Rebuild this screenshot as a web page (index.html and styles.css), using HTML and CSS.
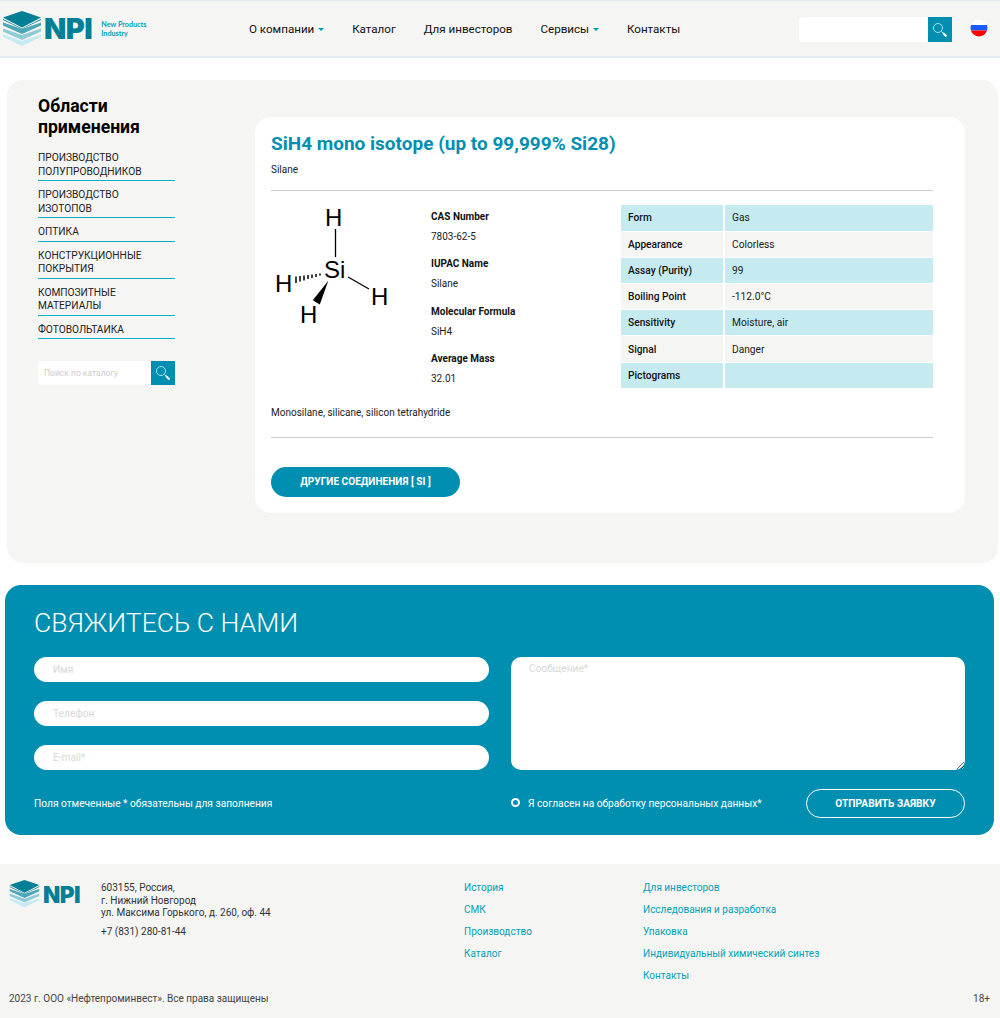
FILE: index.html
```html
<!DOCTYPE html>
<html lang="ru">
<head>
    <meta charset="UTF-8">
    <title>SiH4 mono isotope</title>
    <link rel="stylesheet" href="styles.css">
</head>
<body>

    <!-- Header -->
    <header class="header">
        <a class="logo" href="#">
            <svg class="logo-mark" viewBox="0 0 38 36" width="38" height="36">
                <polygon points="19,30 0,23.5 0,26 19,35 38,26 38,23.5" fill="#c5ebf1"/>
                <polygon points="19,24 0,17.5 0,20.5 19,29 38,20.5 38,17.5" fill="#8fcbd6"/>
                <polygon points="19,18 0,11.5 0,14.5 19,23 38,14.5 38,11.5" fill="#4ba6b7"/>
                <polygon points="19,0 0,6.5 19,16.5 38,6.5" fill="#007f95"/>
                <polygon points="0,8 0,9 19,18 38,9 38,8 19,17.5" fill="#007f95"/>
            </svg>
            <span class="logo-text">NPI</span>
            <span class="logo-sub">New Products<br>Industry</span>
        </a>
        <nav class="nav">
            <a href="#">О компании <i class="caret"></i></a>
            <a href="#">Каталог</a>
            <a href="#">Для инвесторов</a>
            <a href="#">Сервисы <i class="caret"></i></a>
            <a href="#">Контакты</a>
        </nav>
        <form class="search search-top">
            <input type="text">
            <button type="button">
                <svg viewBox="0 0 24 24" width="24" height="24"><circle cx="10" cy="10" r="4.500" fill="none" stroke="#a5e3ee" stroke-width="1"/><path d="M13.500 13.500L15 15" stroke="#cfeff5" stroke-width="1"/><path d="M15 15L18.500 18.500" stroke="#fff" stroke-width="1.800"/></svg>
            </button>
        </form>
        <svg class="flag" viewBox="0 0 18 18" width="18" height="18">
            <clipPath id="flag-clip"><circle cx="9" cy="9" r="8.500"/></clipPath>
            <g clip-path="url(#flag-clip)">
                <rect width="18" height="6" fill="#fff"/>
                <rect y="6" width="18" height="5.500" fill="#1a5cff"/>
                <rect y="11.500" width="18" height="6.500" fill="#f00"/>
            </g>
        </svg>
    </header>

    <!-- Product -->
    <main class="main">
        <aside class="side">
            <h2 class="side-title">Области применения</h2>
            <ul class="side-list">
                <li>Производство полупроводников</li>
                <li>Производство изотопов</li>
                <li>Оптика</li>
                <li>Конструкционные покрытия</li>
                <li>Композитные материалы</li>
                <li>Фотовольтаика</li>
            </ul>
            <form class="search search-side">
                <input type="text" placeholder="Поиск по каталогу">
                <button type="button">
                    <svg viewBox="0 0 24 24" width="24" height="24"><circle cx="10" cy="10" r="4.500" fill="none" stroke="#a5e3ee" stroke-width="1"/><path d="M13.500 13.500L15 15" stroke="#cfeff5" stroke-width="1"/><path d="M15 15L18.500 18.500" stroke="#fff" stroke-width="1.800"/></svg>
                </button>
            </form>
        </aside>

        <section class="card">
            <h1 class="card-title">SiH4 mono isotope (up to 99,999% Si28)</h1>
            <p class="card-sub">Silane</p>
            <div class="info">
                <svg class="formula" viewBox="0 0 130 126" width="130" height="126">
                    <g font-family="'Liberation Sans', sans-serif" font-size="24" fill="#000">
                        <text x="54" y="21">H</text>
                        <text x="53" y="73">Si</text>
                        <text x="4" y="87">H</text>
                        <text x="100" y="100">H</text>
                        <text x="29" y="118">H</text>
                    </g>
                    <path d="M64.500 24V52" stroke="#000" stroke-width="1.300"/>
                    <path d="M77 72L98 84" stroke="#000" stroke-width="1.300"/>
                    <polygon points="57.300,75.700 41.800,95.200 48.800,99.500" fill="#000"/>
                    <path d="M25 71.500V78M29 71V76.500M33 70.500V75.500M37 70V74M41 69.500V73M45 69V72M49 68.500V70.500" stroke="#000" stroke-width="1.500"/>
                </svg>
                <dl class="props">
                    <dt>CAS Number</dt><dd>7803-62-5</dd>
                    <dt>IUPAC Name</dt><dd>Silane</dd>
                    <dt>Molecular Formula</dt><dd>SiH4</dd>
                    <dt>Average Mass</dt><dd>32.01</dd>
                </dl>
                <table class="spec">
                    <tr><th>Form</th><td>Gas</td></tr>
                    <tr><th>Appearance</th><td>Colorless</td></tr>
                    <tr><th>Assay (Purity)</th><td>99</td></tr>
                    <tr><th>Boiling Point</th><td>-112.0°C</td></tr>
                    <tr><th>Sensitivity</th><td>Moisture, air</td></tr>
                    <tr><th>Signal</th><td>Danger</td></tr>
                    <tr><th>Pictograms</th><td></td></tr>
                </table>
            </div>
            <p class="synonyms">Monosilane, silicane, silicon tetrahydride</p>
            <a class="btn-other" href="#">Другие соединения [ Si ]</a>
        </section>
    </main>

    <!-- Contact form -->
    <section class="contact">
        <h2 class="contact-title">Свяжитесь с нами</h2>
        <form class="contact-form">
            <div class="fields">
                <input type="text" placeholder="Имя">
                <input type="text" placeholder="Телефон">
                <input type="text" placeholder="E-mail*">
            </div>
            <textarea placeholder="Сообщение*"></textarea>
            <p class="note">Поля отмеченные * обязательны для заполнения</p>
            <div class="submit-row">
                <label class="agree"><i class="radio"></i>Я согласен на обработку персональных данных*</label>
                <button class="btn-send" type="button">Отправить заявку</button>
            </div>
        </form>
    </section>

    <!-- Footer -->
    <footer class="footer">
        <div class="footer-top">
            <a class="footer-logo" href="#">
                <svg viewBox="0 0 38 36" width="31" height="28">
                    <polygon points="19,30 0,23.5 0,26 19,35 38,26 38,23.5" fill="#c5ebf1"/>
                    <polygon points="19,24 0,17.5 0,20.5 19,29 38,20.5 38,17.5" fill="#8fcbd6"/>
                    <polygon points="19,18 0,11.5 0,14.5 19,23 38,14.5 38,11.5" fill="#4ba6b7"/>
                    <polygon points="19,0 0,6.5 19,16.5 38,6.5" fill="#007f95"/>
                    <polygon points="0,8 0,9 19,18 38,9 38,8 19,17.5" fill="#007f95"/>
                </svg>
                <span class="footer-logo-text">NPI</span>
            </a>
            <div class="address">
                <p>603155, Россия,<br>г. Нижний Новгород<br>ул. Максима Горького, д. 260, оф. 44</p>
                <p class="phone">+7 (831) 280-81-44</p>
            </div>
            <ul class="links links-a">
                <li><a href="#">История</a></li>
                <li><a href="#">СМК</a></li>
                <li><a href="#">Производство</a></li>
                <li><a href="#">Каталог</a></li>
            </ul>
            <ul class="links">
                <li><a href="#">Для инвесторов</a></li>
                <li><a href="#">Исследования и разработка</a></li>
                <li><a href="#">Упаковка</a></li>
                <li><a href="#">Индивидуальный химический синтез</a></li>
                <li><a href="#">Контакты</a></li>
            </ul>
        </div>
        <div class="footer-bottom">
            <span>2023 г. ООО «Нефтепроминвест». Все права защищены</span>
            <span>18+</span>
        </div>
    </footer>

</body>
</html>
```

FILE: styles.css
```css
* {
    box-sizing: border-box;
}

body {
    margin: 0;
    font-family: Roboto, sans-serif;
    font-size: 12px;
    color: #222;
    background-color: #fff;
}

a {
    text-decoration: none;
    color: inherit;
}

/* Header */
.header {
    height: 58px;
    display: flex;
    align-items: center;
    background-color: #f5f5f3;
    border-top: 1px solid #e2eef1;
    border-bottom: 2px solid #e2eef1;
    padding: 0 12px 0 3px;
}

.logo {
    width: 246px;
    display: flex;
    align-items: center;
    flex-shrink: 0;
}

.logo-mark {
    margin-top: 1px;
}

.logo-text {
    font-family: Inter, sans-serif;
    font-weight: 900;
    font-size: 29px;
    line-height: 30px;
    color: #007f95;
    margin-left: 3px;
    letter-spacing: -0.5px;
}

.logo-sub {
    font-family: Lato, sans-serif;
    font-weight: 700;
    font-size: 7.200px;
    line-height: 9px;
    color: #00a3b8;
    margin-left: 9px;
}

.nav {
    display: flex;
    gap: 28px;
    font-size: 11.600px;
    color: #111;
    width: 550px;
    margin-top: 1px;
    flex-shrink: 0;
}

.nav a {
    white-space: nowrap;
}

.caret {
    display: inline-block;
    width: 0;
    height: 0;
    margin-left: 1px;
    vertical-align: 2px;
    border-left: 3px solid transparent;
    border-right: 3px solid transparent;
    border-top: 3px solid #009bb5;
}

.search {
    display: flex;
    flex-shrink: 0;
}

.search input {
    flex: 1;
    min-width: 0;
    border: none;
    border-radius: 4px 0 0 4px;
    background-color: #fff;
    padding: 0 6px;
    font-family: Roboto, sans-serif;
    font-size: 8.500px;
    outline: none;
}

.search input::placeholder {
    color: #ccc;
    opacity: 1;
}

.search button {
    width: 24px;
    padding: 0;
    border: none;
    background-color: #008fb0;
}

.search svg {
    display: block;
}

.search-top {
    width: 153px;
    height: 25px;
    margin-top: 2px;
}

.flag {
    margin: 0 0 1px 18px;
    flex-shrink: 0;
}

/* Product block */
.main {
    display: flex;
    width: 991px;
    height: 483px;
    margin: 22px 0 0 7px;
    padding: 15px 33px 0 31px;
    background-color: #f5f5f3;
    border-radius: 16px;
}

.side {
    width: 137px;
    margin-right: 80px;
    padding-top: 1px;
    flex-shrink: 0;
}

.side-title {
    margin: 0 0 11px;
    font-size: 17.600px;
    line-height: 21px;
    font-weight: 700;
    color: #000;
}

.side-list {
    list-style: none;
    margin: 0;
    padding: 0;
}

.side-list li {
    padding: 2px 20px 1.900px 0;
    margin-bottom: 5px;
    border-bottom: 1px solid #00aec6;
    font-size: 10.200px;
    line-height: 13.600px;
    text-transform: uppercase;
    color: #222;
}

.search-side {
    height: 24px;
    margin-top: 22px;
}

/* Card */
.card {
    width: 710px;
    height: 396px;
    margin-top: 22px;
    padding: 16px 32px 0 16px;
    background-color: #fff;
    border-radius: 16px;
}

.card-title {
    margin: 0;
    font-size: 19px;
    line-height: 22px;
    font-weight: 700;
    color: #008fb0;
}

.card-sub {
    margin: 8px 0 0;
    line-height: 14px;
    padding-bottom: 13px;
    border-bottom: 1px solid #ccc;
    font-size: 10px;
}

.info {
    display: flex;
    align-items: flex-start;
    height: 183px;
    margin-top: 14px;
}

.formula {
    flex-shrink: 0;
    margin-right: 30px;
}

.props {
    width: 190px;
    margin: 0;
    padding-top: 4.500px;
    font-size: 10px;
    line-height: 14px;
    flex-shrink: 0;
}

.props dt {
    font-weight: 700;
    color: #111;
}

.props dd {
    margin: 6px 0 13.500px;
}

.spec {
    width: 313px;
    border-collapse: collapse;
    font-size: 10.200px;
    line-height: 14px;
}

.spec th,
.spec td {
    height: 26.200px;
    padding: 1px 7px 0;
    text-align: left;
    background-color: #f5f5f3;
    border-bottom: 1.500px solid #fff;
}

.spec td {
    padding-left: 7px;
    border-left: 2px solid #fff;
}

.spec th {
    width: 103px;
    font-weight: 500;
    color: #111;
}

.spec tr:nth-child(odd) th,
.spec tr:nth-child(odd) td {
    background-color: #c5ebf1;
}

.synonyms {
    margin: 18px 0 0;
    line-height: 14px;
    font-size: 10px;
    padding-bottom: 17px;
    border-bottom: 1px solid #ccc;
}

.btn-other {
    display: block;
    width: 189px;
    height: 30px;
    margin-top: 29px;
    border-radius: 15px;
    background-color: #008fb0;
    color: #fff;
    font-size: 10.100px;
    font-weight: 700;
    line-height: 30px;
    text-align: center;
    text-transform: uppercase;
}

/* Contact */
.contact {
    width: 989px;
    height: 250px;
    margin: 22px 0 0 5px;
    padding: 22px 29px 0;
    background-color: #008fb0;
    border-radius: 16px;
    color: #fff;
}

.contact-title {
    margin: 0 0 18px;
    font-size: 26.600px;
    line-height: 32px;
    font-weight: 300;
    text-transform: uppercase;
}

.contact-form {
    display: grid;
    grid-template-columns: 455px 454px;
    column-gap: 22px;
}

.fields {
    display: flex;
    flex-direction: column;
    gap: 19px;
}

.contact input,
.contact textarea {
    border: none;
    background-color: #fff;
    font-family: Roboto, sans-serif;
    font-size: 10.200px;
    outline: none;
    display: block;
}

.contact input {
    height: 25px;
    border-radius: 13px;
    padding: 0 19px;
}

.contact textarea {
    width: 100%;
    height: 113px;
    border-radius: 10px;
    padding: 6px 18px;
}

.contact input::placeholder,
.contact textarea::placeholder {
    color: #d8d8d8;
    opacity: 1;
}

.note {
    margin: 27px 0 0;
    font-size: 10.200px;
    line-height: 14px;
}

.submit-row {
    display: flex;
    justify-content: space-between;
    align-items: center;
    height: 30px;
    margin-top: 18px;
}

.agree {
    display: flex;
    align-items: center;
    font-size: 10.200px;
}

.radio {
    width: 9px;
    height: 9px;
    margin-right: 8px;
    border: 2.500px solid #fff;
    border-radius: 50%;
    margin-bottom: 2px;
}

.btn-send {
    width: 159px;
    height: 29px;
    border: 1.500px solid #fff;
    border-radius: 15px;
    background-color: transparent;
    color: #fff;
    font-family: Roboto, sans-serif;
    font-size: 10.200px;
    font-weight: 700;
    text-transform: uppercase;
}

/* Footer */
.footer {
    height: 154px;
    margin-top: 29px;
    padding: 16px 10px 0 9px;
    background-color: #f5f5f3;
    font-size: 10px;
    color: #333;
}

.footer-top {
    display: flex;
    height: 112px;
}

.footer-logo {
    width: 92px;
    display: flex;
    align-items: flex-start;
    flex-shrink: 0;
}

.footer-logo-text {
    font-family: Inter, sans-serif;
    font-weight: 900;
    font-size: 22.500px;
    line-height: 29px;
    color: #007f95;
    margin-left: 3px;
    letter-spacing: -0.5px;
}

.address {
    width: 363px;
    padding-top: 2px;
    line-height: 12.500px;
    flex-shrink: 0;
}

.address p {
    margin: 0;
}

.address .phone {
    margin-top: 6px;
}

.links {
    list-style: none;
    margin: 0;
    padding: 1px 0 0;
    color: #00a3b8;
}

.links li {
    line-height: 14px;
    margin-bottom: 8px;
}

.links-a {
    width: 179px;
    flex-shrink: 0;
}

.footer-bottom {
    display: flex;
    justify-content: space-between;
    line-height: 14px;
    color: #444;
}
```
